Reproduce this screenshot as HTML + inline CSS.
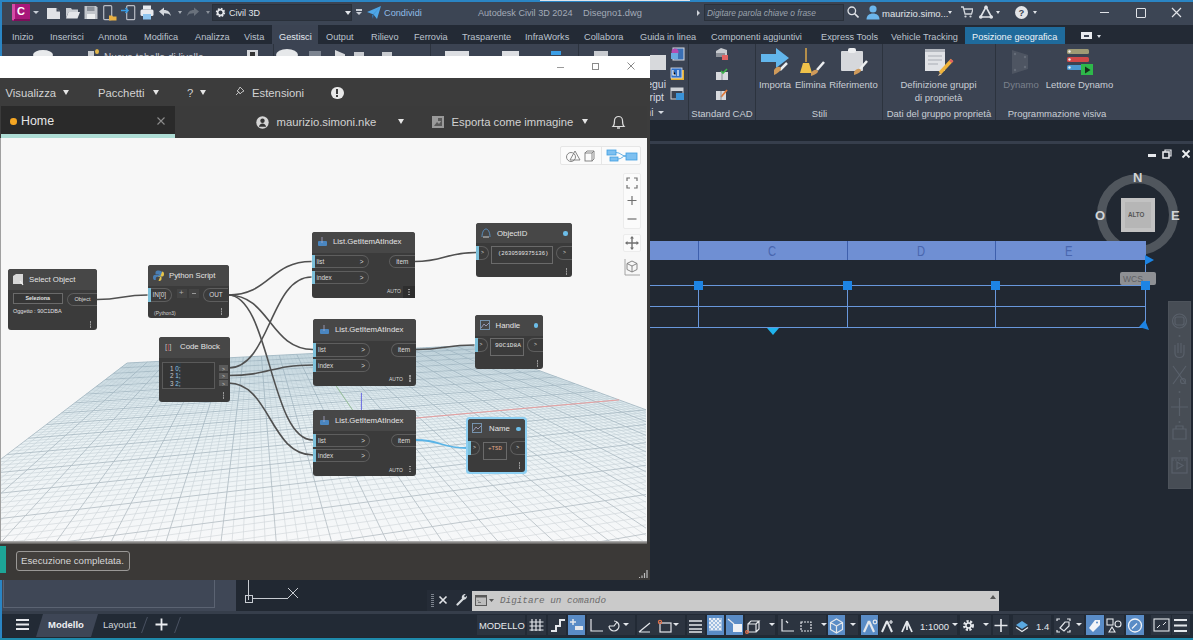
<!DOCTYPE html>
<html><head><meta charset="utf-8">
<style>
*{box-sizing:border-box}
html,body{margin:0;padding:0}
body{width:1193px;height:640px;overflow:hidden;position:relative;background:#212832;font-family:"Liberation Sans",sans-serif;color:#d8dde4}
.a{position:absolute}
.t{position:absolute;white-space:nowrap;line-height:1}
.tab{position:absolute;top:32px;font-size:9.2px;color:#bcc3cd;white-space:nowrap;line-height:11px}
.rl{position:absolute;font-size:9.5px;color:#c9ced5;white-space:nowrap;line-height:11px;text-align:center}
.sep{position:absolute;top:44px;width:1px;height:76px;background:#2c333e}
.sb{position:absolute;top:615px;height:20px;background:#2c3440}
.hl{background:#5a8cc6}
.dm{position:absolute;font-size:11.3px;color:#d2d2d2;white-space:nowrap;line-height:14px}
.tri{position:absolute;width:0;height:0;border-left:3.5px solid transparent;border-right:3.5px solid transparent;border-top:5px solid #e6e6e6}
.node{position:absolute;background:#3b3b3b;border-radius:3px;overflow:hidden}
.nh{position:absolute;left:0;top:0;right:0;background:#474747}
.nt{position:absolute;font-size:7.8px;color:#e4e4e4;white-space:nowrap;line-height:10px}
.pin{position:absolute;border:1px solid #5e5e5e;border-left:none;border-radius:0 7px 7px 0;font-size:6.4px;color:#dcdcdc;line-height:11px;padding-left:5px}
.pin:before{content:"";position:absolute;left:0;top:-1px;bottom:-1px;width:3px;background:#7cc0da}
.pout{position:absolute;border:1px solid #5e5e5e;border-right:none;border-radius:7px 0 0 7px;font-size:6.4px;color:#dcdcdc;line-height:11px;text-align:center}
.kb{position:absolute;width:1.5px;height:1.5px;background:#9a9a9a;box-shadow:0 2.5px 0 #9a9a9a,0 5px 0 #9a9a9a}
</style></head><body>

<!-- ===== AutoCAD frame ===== -->
<div class="a" style="left:0;top:0;width:1193px;height:2px;background:#2a85c4"></div>
<div class="a" style="left:0;top:0;width:2px;height:640px;background:#2a85c4"></div>
<div class="a" style="left:540px;top:0;width:150px;height:1px;background:#dfe6ee"></div>
<div class="a" style="left:2px;top:2px;width:1191px;height:23px;background:#3c4554"></div>
<div class="a" style="left:2px;top:25px;width:1191px;height:19px;background:#232a35"></div>
<div class="a" style="left:2px;top:44px;width:1191px;height:76px;background:#3b4352"></div>
<div class="a" style="left:2px;top:120px;width:1191px;height:21px;background:#1f2630"></div>
<div class="a" style="left:2px;top:141px;width:1191px;height:3px;background:#363e4c"></div>

<!-- title bar -->
<div id="titlebar">
<div class="a" style="left:12px;top:4px;width:18px;height:17px;background:#a8177a;border-radius:1px"></div>
<div class="a" style="left:12px;top:4px;width:3px;height:16px;background:#d54ba6"></div>
<div class="a" style="left:14px;top:19px;width:16px;height:2px;background:#7d0f5a"></div>
<div class="t" style="left:17px;top:6px;font-size:11px;font-weight:bold;color:#fff">C</div>
<div class="tri" style="left:33px;top:11px;border-top-color:#c8ced6;border-width:3px 3px 0 3px"></div>
<!-- new -->
<svg class="a" style="left:46px;top:5px" width="15" height="15" viewBox="0 0 15 15"><path d="M1 3h9.5l3.5 3.5V14H1z" fill="#e0e2e6"/><path d="M10.5 3v3.5H14z" fill="#3c4554"/></svg>
<!-- open -->
<svg class="a" style="left:65px;top:5px" width="15" height="15" viewBox="0 0 15 15"><path d="M1 3h5l1 1.5h6V7H3.5L1 13z" fill="#c9cdd3"/><path d="M3.5 7H15l-2.5 6.5H1z" fill="#e4e6ea"/></svg>
<!-- save -->
<svg class="a" style="left:84px;top:5px" width="14" height="15" viewBox="0 0 14 15"><path d="M0.5 1h11.5l1.5 1.5V14H0.5z" fill="#c2c6cc"/><rect x="3" y="1.5" width="7.5" height="4.5" fill="#8a9099"/><rect x="3" y="9" width="8" height="5" fill="#eceef0"/></svg>
<!-- saveas/phone -->
<svg class="a" style="left:103px;top:5px" width="14" height="16" viewBox="0 0 14 16"><rect x="0.7" y="0.7" width="8" height="14" rx="1" fill="#3c4554" stroke="#b8bcc4" stroke-width="1.2"/><path d="M6 10.5h3l1 1h3.5v4H6z" fill="#e8b042"/></svg>
<!-- import -->
<svg class="a" style="left:121px;top:5px" width="15" height="16" viewBox="0 0 15 16"><rect x="5.7" y="0.7" width="8" height="14" rx="1" fill="none" stroke="#b8bcc4" stroke-width="1.2"/><path d="M0 5.5h6.5M4.5 3L7 5.5 4.5 8" stroke="#3a9ee6" stroke-width="1.5" fill="none"/></svg>
<!-- print -->
<svg class="a" style="left:140px;top:5px" width="14" height="15" viewBox="0 0 14 15"><rect x="3" y="0.5" width="8" height="4" fill="#e8eaee"/><rect x="0.5" y="4.5" width="13" height="6.5" rx="1.5" fill="#e8eaee"/><rect x="3" y="9" width="8" height="5.5" fill="#8ec4ee"/></svg>
<!-- undo -->
<svg class="a" style="left:159px;top:7px" width="12" height="10" viewBox="0 0 12 10"><path d="M0 4.5L5 0.5V3c4 0 6 2 7 6-1.5-2-3.5-2.7-7-2.7V9z" fill="#d4d8de"/></svg>
<div class="tri" style="left:178px;top:11px;border-top-color:#aab0b8;border-width:3px 2px 0 2px"></div>
<svg class="a" style="left:187px;top:7px" width="12" height="10" viewBox="0 0 12 10"><path d="M12 4.5L7 0.5V3c-4 0-6 2-7 6 1.5-2 3.5-2.7 7-2.7V9z" fill="#69717c"/></svg>
<div class="tri" style="left:206px;top:11px;border-top-color:#8a9099;border-width:3px 2px 0 2px"></div>
<!-- combo -->
<div class="a" style="left:212px;top:4px;width:140px;height:17px;background:#2f3642;border:1px solid #29303a"></div>
<svg class="a" style="left:215px;top:7px" width="11" height="11" viewBox="0 0 11 11"><circle cx="5.5" cy="5.5" r="3.6" fill="none" stroke="#e6e8ec" stroke-width="2.2" stroke-dasharray="1.6 1.2"/><circle cx="5.5" cy="5.5" r="2.8" fill="none" stroke="#e6e8ec" stroke-width="1.5"/></svg>
<div class="t" style="left:229px;top:9px;font-size:9px;color:#e2e5ea">Civil 3D</div>
<div class="tri" style="left:345px;top:11px;border-top-color:#e2e5ea;border-width:4px 3px 0 3px"></div>
<div class="a" style="left:356px;top:9px;width:6px;height:1.5px;background:#c9ced6"></div>
<div class="tri" style="left:356px;top:12px;border-top-color:#c9ced6;border-width:3px 3px 0 3px"></div>
<svg class="a" style="left:367px;top:6px" width="14" height="13" viewBox="0 0 14 13"><path d="M0 6L14 0 10 13 6.5 8.5z" fill="#4ea6e6"/><path d="M6.5 8.5L14 0 5 9.5 6 13z" fill="#2f7fc0"/></svg>
<div class="t" style="left:384px;top:9px;font-size:9.2px;color:#8fbce6">Condividi</div>
<div class="t" style="left:478px;top:9px;font-size:9.1px;color:#a3abb7">Autodesk Civil 3D 2024</div>
<div class="t" style="left:583px;top:9px;font-size:9.3px;color:#a3abb7">Disegno1.dwg</div>
<div class="a" style="left:697px;top:9.5px;width:0;height:0;border-top:3px solid transparent;border-bottom:3px solid transparent;border-left:3.5px solid #d0d4da"></div>
<div class="a" style="left:704px;top:4px;width:140px;height:17px;background:#343c49;border:1px solid #2a313b"></div>
<div class="t" style="left:707px;top:9px;font-size:8.4px;font-style:italic;color:#9ba3ae">Digitare parola chiave o frase</div>
<svg class="a" style="left:847px;top:6px" width="12" height="12" viewBox="0 0 12 12"><circle cx="4.8" cy="4.8" r="3.8" fill="none" stroke="#dfe2e7" stroke-width="1.3"/><path d="M7.5 7.5L11.5 11.5" stroke="#dfe2e7" stroke-width="1.6"/></svg>
<svg class="a" style="left:866px;top:5px" width="14" height="15" viewBox="0 0 14 15"><circle cx="7" cy="4" r="3.6" fill="#6cb6ec"/><path d="M0.5 14.5c0-4 2.8-6 6.5-6s6.5 2 6.5 6z" fill="#6cb6ec"/></svg>
<div class="t" style="left:882px;top:9px;font-size:9.5px;color:#e2e5ea">maurizio.simo...</div>
<div class="tri" style="left:948px;top:11px;border-top-color:#dfe2e7;border-width:3px 2px 0 2px"></div>
<svg class="a" style="left:961px;top:6px" width="12" height="12" viewBox="0 0 12 12"><path d="M0 1h2.2l1.8 7h6.5L12 3H3.2" fill="none" stroke="#cfd3d9" stroke-width="1.3"/><circle cx="4.5" cy="10.5" r="1.1" fill="#cfd3d9"/><circle cx="9.5" cy="10.5" r="1.1" fill="#cfd3d9"/></svg>
<svg class="a" style="left:979px;top:5px" width="14" height="14" viewBox="0 0 14 14"><path d="M7 2L1.5 12h11z" fill="none" stroke="#dfe2e7" stroke-width="1.6"/><circle cx="7" cy="2.3" r="1.8" fill="#dfe2e7"/><circle cx="1.8" cy="12" r="1.8" fill="#dfe2e7"/><circle cx="12.2" cy="12" r="1.8" fill="#dfe2e7"/></svg>
<div class="tri" style="left:996px;top:11px;border-top-color:#dfe2e7;border-width:3px 2px 0 2px"></div>
<div class="a" style="left:1015px;top:6px;width:13px;height:13px;border-radius:50%;background:#e3e5e8"></div>
<div class="t" style="left:1018.5px;top:8px;font-size:9.5px;font-weight:bold;color:#3c4554">?</div>
<div class="tri" style="left:1033px;top:11px;border-top-color:#dfe2e7;border-width:3px 2px 0 2px"></div>
<div class="a" style="left:1100px;top:12px;width:9px;height:1.2px;background:#e0e3e8"></div>
<div class="a" style="left:1136px;top:8px;width:10px;height:10px;border:1.2px solid #e0e3e8;border-radius:1px"></div>
<svg class="a" style="left:1171px;top:7px" width="11" height="11" viewBox="0 0 11 11"><path d="M1 1l9 9M10 1l-9 9" stroke="#e0e3e8" stroke-width="1.2"/></svg>
</div>

<!-- tabs -->
<div class="a" style="left:272px;top:25px;width:46px;height:19px;background:#3b4352"></div>
<div class="a" style="left:965px;top:27px;width:100px;height:17px;background:#1f6b9c"></div>
<div class="tab" style="left:12px">Inizio</div>
<div class="tab" style="left:50px">Inserisci</div>
<div class="tab" style="left:98px">Annota</div>
<div class="tab" style="left:144px">Modifica</div>
<div class="tab" style="left:195px">Analizza</div>
<div class="tab" style="left:244px">Vista</div>
<div class="tab" style="left:279px;color:#e4e8ee">Gestisci</div>
<div class="tab" style="left:326px">Output</div>
<div class="tab" style="left:371px">Rilievo</div>
<div class="tab" style="left:414px">Ferrovia</div>
<div class="tab" style="left:462px">Trasparente</div>
<div class="tab" style="left:525px">InfraWorks</div>
<div class="tab" style="left:584px">Collabora</div>
<div class="tab" style="left:640px">Guida in linea</div>
<div class="tab" style="left:711px">Componenti aggiuntivi</div>
<div class="tab" style="left:821px">Express Tools</div>
<div class="tab" style="left:891px">Vehicle Tracking</div>
<div class="tab" style="left:972px;color:#eef3f8">Posizione geografica</div>
<div class="a" style="left:1081px;top:32px;width:11px;height:7px;background:#e8eaee"></div>
<div class="a" style="left:1084px;top:35px;width:5px;height:1.5px;background:#3a4252"></div>
<div class="tri" style="left:1097px;top:34.5px;border-top-color:#d8dce2;border-width:3px 2.5px 0 2.5px"></div>

<!-- ribbon -->
<div id="ribbon">
<div class="sep" style="left:273px"></div>
<div class="sep" style="left:430px"></div>
<div class="sep" style="left:578px"></div>
<div class="sep" style="left:688px"></div>
<div class="sep" style="left:755px"></div>
<div class="sep" style="left:882px"></div>
<div class="sep" style="left:995px"></div>
<!-- peeking icons top -->
<div class="a" style="left:33px;top:50px;width:20px;height:10px;border-radius:50%;background:#e8eaec"></div>
<div class="a" style="left:88px;top:51px;width:6px;height:5px;background:#c9ccd0"></div>
<div class="a" style="left:95px;top:49px;width:4px;height:5px;border-radius:50%;background:#e2b64a"></div>
<div class="t" style="left:104px;top:52.5px;font-size:10px;color:#c4c8ce">Nuova tabella di livello...</div>
<div class="a" style="left:247px;top:50px;width:11px;height:7px;background:#d6d8dc"></div>
<div class="a" style="left:250px;top:52px;width:5px;height:5px;background:#333"></div>
<div class="a" style="left:276px;top:49px;width:22px;height:12px;border-radius:50%;background:#e6e8ea"></div>
<div class="a" style="left:309px;top:51px;width:12px;height:6px;background:#7c8490"></div>
<div class="a" style="left:335px;top:50px;width:10px;height:7px;background:#d8dadd;clip-path:polygon(0 0,100% 60%,100% 100%,0 100%)"></div>
<div class="a" style="left:354px;top:52px;width:10px;height:5px;background:#c8cbd0"></div>
<div class="a" style="left:382px;top:52px;width:10px;height:5px;background:#c8cbd0"></div>
<div class="a" style="left:445px;top:51px;width:24px;height:6px;background:#dcdee2"></div>
<div class="a" style="left:502px;top:51px;width:17px;height:6px;background:#dcdee2"></div>
<div class="a" style="left:551px;top:51px;width:10px;height:4px;background:#3a9ee6"></div>
<div class="a" style="left:594px;top:51px;width:14px;height:6px;background:#c8cbd0"></div>
<!-- right of dynamo -->
<div class="a" style="left:650px;top:55px;width:16px;height:15px;background:#d7d9dc"></div>
<div class="t" style="left:565px;top:79px;width:101px;text-align:right;font-size:10.5px;color:#d4d9e0">Esegui</div>
<div class="t" style="left:565px;top:92px;width:99px;text-align:right;font-size:10.5px;color:#d4d9e0">script</div>
<div class="t" style="left:600px;top:108px;width:52px;text-align:right;font-size:10px;color:#d4d9e0">Applicazioni</div>
<div class="tri" style="left:658px;top:111px;border-top-color:#d4d9e0;border-width:3.5px 3px 0 3px"></div>
<svg class="a" style="left:670px;top:47px" width="15" height="14" viewBox="0 0 15 14"><rect x="3" y="1" width="11" height="12" fill="#3a6fb4" stroke="#d9dbe0" stroke-width="1"/><circle cx="5" cy="5" r="3.5" fill="#b54bb0"/><rect x="1" y="6" width="7" height="6" fill="#6aa8e0"/></svg>
<svg class="a" style="left:670px;top:67px" width="15" height="14" viewBox="0 0 15 14"><rect x="1" y="3" width="13" height="10" fill="#e4b030"/><rect x="1" y="1" width="11" height="10" fill="#2f6fc6" stroke="#e0e4ea" stroke-width="0.8"/><path d="M3 3v5h3M8 3v6" stroke="#fff" stroke-width="1.2"/></svg>
<svg class="a" style="left:670px;top:87px" width="15" height="14" viewBox="0 0 15 14"><rect x="1" y="1" width="12" height="11" fill="none" stroke="#d0d3d8" stroke-width="1"/><rect x="1" y="1" width="12" height="3" fill="#d0d3d8"/><rect x="6" y="6" width="8" height="7" fill="#3b93d8"/></svg>
<!-- standard cad -->
<svg class="a" style="left:715px;top:47px" width="14" height="14" viewBox="0 0 14 14"><path d="M1 4l5-3 6 2v6H1z" fill="#c8cbd0"/><rect x="1" y="6" width="9" height="4" fill="#8c9098"/><rect x="7" y="8" width="6" height="5" fill="#e26464"/></svg>
<svg class="a" style="left:715px;top:67px" width="14" height="14" viewBox="0 0 14 14"><rect x="1" y="5" width="12" height="8" fill="#d8dade"/><path d="M7 5v8" stroke="#8c9098"/><path d="M6 4l2 2 4-4" stroke="#3db44a" stroke-width="1.6" fill="none"/></svg>
<svg class="a" style="left:715px;top:87px" width="14" height="14" viewBox="0 0 14 14"><rect x="1" y="4" width="10" height="9" fill="#d8dade"/><path d="M6 10l6-7" stroke="#e07a3a" stroke-width="1.8"/><path d="M6 4v9" stroke="#8c9098"/></svg>
<div class="rl" style="left:689px;top:108px;width:66px">Standard CAD</div>
<!-- stili -->
<svg class="a" style="left:760px;top:48px" width="30" height="28" viewBox="0 0 30 28"><path d="M1 6h15V0l13 10-13 10v-6H1z" fill="#62b6ec"/><path d="M27 15l-7 7" stroke="#eceef0" stroke-width="2.5"/><path d="M14 22c2-3 5-4 6.5-2.5S20 24 14 27z" fill="#cf9a5a"/></svg>
<div class="rl" style="left:756px;top:79px;width:38px">Importa</div>
<svg class="a" style="left:796px;top:48px" width="30" height="28" viewBox="0 0 30 28"><path d="M10 0v14" stroke="#d4a24a" stroke-width="1.6"/><path d="M4 25l3-10h6l3 10z" fill="#f0c24a"/><path d="M28 14l-7 8" stroke="#eceef0" stroke-width="2.5"/><path d="M15 25c2-3 5-4 6.5-2.5S21 26 15 28z" fill="#cf9a5a"/></svg>
<div class="rl" style="left:794px;top:79px;width:33px">Elimina</div>
<svg class="a" style="left:839px;top:47px" width="30" height="30" viewBox="0 0 30 30"><rect x="2" y="4" width="22" height="20" rx="1" fill="#d6d8dc"/><rect x="9" y="1" width="8" height="5" rx="2" fill="#eceef0"/><path d="M28 14l-7 8" stroke="#eceef0" stroke-width="2.5"/><path d="M15 25c2-3 5-4 6.5-2.5S21 26 15 28z" fill="#cf9a5a"/></svg>
<div class="rl" style="left:827px;top:79px;width:53px">Riferimento</div>
<div class="rl" style="left:757px;top:108px;width:125px">Stili</div>
<!-- dati -->
<svg class="a" style="left:923px;top:47px" width="32" height="30" viewBox="0 0 32 30"><rect x="2" y="2" width="20" height="22" fill="#e0e2e6"/><rect x="2" y="2" width="20" height="3" fill="#b5b9c0"/><path d="M5 9h14M5 13h14M5 17h10" stroke="#a8acb4" stroke-width="1"/><path d="M29 13L17 26" stroke="#f0b43c" stroke-width="3.5"/><path d="M17 26l-2 3 3.5-1.5z" fill="#e8c9a0"/><path d="M29 13l-1.5 2" stroke="#e06060" stroke-width="3.5"/></svg>
<div class="rl" style="left:890px;top:79px;width:97px">Definizione gruppi</div>
<div class="rl" style="left:890px;top:92px;width:97px">di proprietà</div>
<div class="rl" style="left:883px;top:108px;width:112px">Dati del gruppo proprietà</div>
<!-- programmazione -->
<svg class="a" style="left:1010px;top:48px" width="22" height="28" viewBox="0 0 22 28"><path d="M2 2l16 5v14L2 26z" fill="#4e5562"/><circle cx="5" cy="6" r="1.2" fill="#656c78"/><circle cx="5" cy="22" r="1.2" fill="#656c78"/><circle cx="15" cy="9" r="1.2" fill="#656c78"/><circle cx="15" cy="19" r="1.2" fill="#656c78"/></svg>
<div class="rl" style="left:999px;top:79px;width:44px;color:#7a818c">Dynamo</div>
<svg class="a" style="left:1066px;top:48px" width="28" height="28" viewBox="0 0 28 28"><rect x="1" y="1" width="22" height="5" rx="1.5" fill="#9e9a74"/><circle cx="3.5" cy="3.5" r="1.2" fill="#eee"/><rect x="1" y="9" width="22" height="5" rx="1.5" fill="#d04848"/><circle cx="3.5" cy="11.5" r="1.2" fill="#eee"/><rect x="1" y="17" width="16" height="5" rx="1.5" fill="#4a98d0"/><circle cx="3.5" cy="19.5" r="1.2" fill="#eee"/><rect x="15" y="16" width="12" height="11" fill="#2eb84a"/><path d="M19 18.5v7l5.5-3.5z" fill="#16301c"/></svg>
<div class="rl" style="left:1043px;top:79px;width:73px">Lettore Dynamo</div>
<div class="rl" style="left:996px;top:108px;width:122px">Programmazione visiva</div>
</div>

<!-- drawing area -->
<div id="drawing">
<div class="a" style="left:1148px;top:154px;width:8px;height:3px;background:#e6e8ec"></div>
<svg class="a" style="left:1162px;top:149px" width="10" height="10" viewBox="0 0 10 10"><rect x="1" y="3" width="6" height="6" fill="none" stroke="#e6e8ec" stroke-width="1.6"/><path d="M3 3V1h6v6H7" fill="none" stroke="#e6e8ec" stroke-width="1.2"/></svg>
<svg class="a" style="left:1181px;top:149px" width="10" height="10" viewBox="0 0 10 10"><path d="M1.5 1.5l7 7M8.5 1.5l-7 7" stroke="#eef0f2" stroke-width="1.8"/></svg>
<!-- viewcube -->
<svg class="a" style="left:1090px;top:168px" width="95" height="95" viewBox="0 0 95 95"><circle cx="47.5" cy="46.7" r="36" fill="none" stroke="#50565d" stroke-width="9"/></svg>
<div class="a" style="left:1121px;top:198px;width:34px;height:34px;background:#b6b6b6;box-shadow:inset 0 0 0 4px #c2c2c2"></div>
<div class="t" style="left:1128px;top:211px;font-size:8px;font-weight:bold;color:#555;transform:scaleX(0.78);transform-origin:left">ALTO</div>
<div class="t" style="left:1133px;top:171px;font-size:13px;font-weight:bold;color:#d2d4d6">N</div>
<div class="t" style="left:1095px;top:209px;font-size:13px;font-weight:bold;color:#d2d4d6">O</div>
<div class="t" style="left:1171px;top:209px;font-size:13px;font-weight:bold;color:#d2d4d6">E</div>
<!-- blue bar -->
<div class="a" style="left:650px;top:241px;width:496px;height:19px;background:#6f8fd3"></div>
<div class="a" style="left:698px;top:241px;width:1px;height:19px;background:#3e5fac"></div>
<div class="a" style="left:847px;top:241px;width:1px;height:19px;background:#3e5fac"></div>
<div class="a" style="left:995px;top:241px;width:1px;height:19px;background:#3e5fac"></div>
<div class="t" style="left:767px;top:244px;font-size:14px;color:#4966ae;transform:scaleX(0.8)">C</div>
<div class="t" style="left:916px;top:244px;font-size:14px;color:#4966ae;transform:scaleX(0.8)">D</div>
<div class="t" style="left:1064px;top:244px;font-size:14px;color:#4966ae;transform:scaleX(0.8)">E</div>
<div class="a" style="left:650px;top:285px;width:496px;height:1px;background:#6897dc"></div>
<div class="a" style="left:650px;top:306px;width:496px;height:1px;background:#6897dc"></div>
<div class="a" style="left:650px;top:327px;width:496px;height:1px;background:#6897dc"></div>
<div class="a" style="left:698px;top:285px;width:1px;height:43px;background:#6897dc"></div>
<div class="a" style="left:847px;top:285px;width:1px;height:43px;background:#6897dc"></div>
<div class="a" style="left:995px;top:285px;width:1px;height:43px;background:#6897dc"></div>
<div class="a" style="left:1144.5px;top:260px;width:1px;height:68px;background:#6897dc"></div>
<div class="a" style="left:694px;top:281px;width:9px;height:9px;background:#1d84e4"></div>
<div class="a" style="left:843px;top:281px;width:9px;height:9px;background:#1d84e4"></div>
<div class="a" style="left:991px;top:281px;width:9px;height:9px;background:#1d84e4"></div>
<div class="a" style="left:1120px;top:272px;width:36px;height:13px;background:#8e9094;border-radius:2px"></div>
<div class="t" style="left:1123px;top:275px;font-size:8.5px;color:#5e6064">WCS</div>
<div class="a" style="left:1141px;top:281px;width:9px;height:9px;background:#1d84e4"></div>
<div class="a" style="left:767px;top:328px;width:0;height:0;border-left:6px solid transparent;border-right:6px solid transparent;border-top:7px solid #1fb4ee"></div>
<div class="a" style="left:1145px;top:255px;width:0;height:0;border-top:5px solid transparent;border-bottom:5px solid transparent;border-left:9px solid #1d84e4"></div>
<div class="a" style="left:1139px;top:320px;width:10px;height:10px;background:#1d84e4;clip-path:polygon(60% 0,100% 100%,0 70%)"></div>

<!-- navbar -->
<div class="a" style="left:1168px;top:301px;width:23px;height:188px;background:#474d55;border:1px solid #4d535b"></div>
<svg class="a" style="left:1168px;top:301px" width="23" height="188" viewBox="0 0 23 188"><g fill="none" stroke="#59606a" stroke-width="1.2"><circle cx="11.5" cy="20" r="7"/><rect x="7" y="16" width="9" height="8" rx="2"/><path d="M7 52v-8M10 52v-10M13 52v-10M16 52v-8M7 52c0 6 9 6 9 0"/><path d="M5 65l13 18M18 65L5 83"/><circle cx="15" cy="80" r="2.5"/><path d="M11.5 97v18M3 106h17"/><path d="M5 128h13v10H5zM8 128v-3h7v3"/><rect x="4" y="157" width="15" height="15"/><path d="M9 161v7l6-3.5z"/><path d="M4 159h15" stroke-dasharray="2 1"/></g><g fill="#59606a"><circle cx="11.5" cy="35" r="1"/><circle cx="11.5" cy="91" r="1"/><circle cx="11.5" cy="121" r="1"/><circle cx="11.5" cy="150" r="1"/></g></svg>
<!-- UCS -->
<div class="a" style="left:248px;top:580px;width:1px;height:20px;background:#c8ccd2"></div>
<div class="a" style="left:244.5px;top:594.5px;width:8px;height:8px;border:1px solid #c8ccd2"></div>
<div class="a" style="left:252px;top:598px;width:36px;height:1px;background:#c8ccd2"></div>
<svg class="a" style="left:287px;top:587px" width="12" height="12" viewBox="0 0 12 12"><path d="M1 1l10 10M11 1L1 11" stroke="#c8ccd2" stroke-width="1"/></svg>
<!-- command line -->
<div class="a" style="left:427px;top:590px;width:572px;height:21px;background:#252c37"></div>
<div class="a" style="left:431px;top:594px;width:3px;height:13px;background:repeating-linear-gradient(#7c838d 0 1px,transparent 1px 2px)"></div>
<svg class="a" style="left:438px;top:595px" width="10" height="10" viewBox="0 0 10 10"><path d="M1.5 1.5l7 7M8.5 1.5l-7 7" stroke="#e2e4e8" stroke-width="1.6"/></svg>
<svg class="a" style="left:456px;top:593px" width="12" height="13" viewBox="0 0 12 13"><path d="M1.5 11.5L7 6" stroke="#d8dce0" stroke-width="2.2" stroke-linecap="round"/><path d="M6 5.5c-.8-2.5 1-4.8 3.8-4.5L8 3l1 1.5 2-1.7c.4 2.7-2 4.5-4.5 3.8z" fill="#d8dce0"/></svg>
<div class="a" style="left:471.5px;top:590.5px;width:527px;height:20px;background:#cacaca"></div>
<svg class="a" style="left:475px;top:595px" width="20" height="11" viewBox="0 0 20 11"><rect x="0.5" y="0.5" width="11" height="10" fill="#bdbdbd" stroke="#5a5a5a" stroke-width="1"/><rect x="0.5" y="0.5" width="11" height="2" fill="#5a5a5a"/><path d="M2.5 5l1.5 1.5M3 7.5h3" stroke="#777"/><path d="M14 4h5l-2.5 3z" fill="#555"/></svg>
<div class="t" style="left:500px;top:596px;font-size:9.3px;font-family:'Liberation Mono',monospace;font-style:italic;color:#6a6a6a">Digitare un comando</div>
<div class="a" style="left:990px;top:595px;width:0;height:0;border-left:3px solid transparent;border-right:3px solid transparent;border-bottom:4px solid #555"></div>
</div>

<!-- bottom -->
<div id="bottom">
<div class="a" style="left:2px;top:575px;width:234px;height:36px;background:#3f4756"></div>
<div class="a" style="left:3px;top:560px;width:212px;height:48px;border:1px solid #5b6372"></div>
<div class="a" style="left:2px;top:611px;width:1191px;height:3px;background:#363e4b"></div>
<div class="a" style="left:2px;top:614px;width:1191px;height:23px;background:#222a35"></div>
<div class="a" style="left:0;top:638.2px;width:1193px;height:1.8px;background:#1e8aac"></div>
<!-- layout tabs -->
<div class="a" style="left:16px;top:619px;width:13px;height:2px;background:#e8eaee;box-shadow:0 4.5px 0 #e8eaee,0 9px 0 #e8eaee"></div>
<div class="a" style="left:36px;top:614px;width:62px;height:23px;background:#3e4656;clip-path:polygon(7px 0,100% 0,calc(100% - 7px) 100%,0 100%)"></div>
<div class="t" style="left:48px;top:620px;font-size:9.5px;font-weight:bold;color:#eef0f3">Modello</div>
<div class="t" style="left:103px;top:620px;font-size:9.5px;color:#d0d4da">Layout1</div>
<div class="a" style="left:144px;top:617px;width:1px;height:16px;background:#4a5262;transform:skewX(-20deg)"></div>
<svg class="a" style="left:155px;top:618px" width="13" height="13" viewBox="0 0 13 13"><path d="M6.5 0.5v12M0.5 6.5h12" stroke="#eceef2" stroke-width="1.8"/></svg>
<div class="a" style="left:177px;top:617px;width:1px;height:16px;background:#4a5262;transform:skewX(-20deg)"></div>
<!-- status buttons -->
<div class="sb" style="left:477px;width:48px"></div>
<div class="t" style="left:479px;top:621px;font-size:9.4px;color:#e8eaee">MODELLO</div>
<div class="sb" style="left:527px;width:19px"></div>
<div class="sb" style="left:548px;width:18px"></div>
<div class="sb hl" style="left:568px;width:17px"></div>
<div class="sb" style="left:587px;width:48px"></div>
<div class="sb" style="left:637px;width:48px"></div>
<div class="sb" style="left:687px;width:18px"></div>
<div class="sb hl" style="left:707px;width:17px"></div>
<div class="sb hl" style="left:726px;width:17px"></div>
<div class="sb" style="left:745px;width:30px"></div>
<div class="sb" style="left:778px;width:48px"></div>
<div class="sb hl" style="left:828px;width:17px"></div>
<div class="sb" style="left:845px;width:13px"></div>
<div class="sb hl" style="left:861px;width:17px"></div>
<div class="sb" style="left:879px;width:78px"></div>
<div class="sb" style="left:960px;width:31px"></div>
<div class="sb" style="left:993px;width:16px"></div>
<div class="sb" style="left:1013px;width:38px"></div>
<div class="sb" style="left:1054px;width:30px"></div>
<div class="sb hl" style="left:1086px;width:18px"></div>
<div class="sb" style="left:1105px;width:19px"></div>
<div class="sb hl" style="left:1126px;width:18px"></div>
<div class="sb" style="left:1151px;width:20px"></div>
<div class="sb" style="left:1172px;width:18px"></div>
<svg class="a" style="left:527px;top:615px" width="666" height="20" viewBox="527 615 666 20"><g fill="none" stroke="#e4e7eb" stroke-width="1.2">
<path d="M532 619v12M536 619v12M540 619v12M529.5 622h14M529.5 626h14M529.5 630h14"/>
<path d="M551 631h5v-5h4v-6h5" stroke-width="2"/>
<path d="M573 619v6M570 622h6" stroke-width="1.5"/><rect x="575" y="626" width="8" height="4" fill="#e4e7eb" stroke="none"/>
<path d="M591 619v12h12"/><path d="M609 626a5 5 0 1 0 5-5M609 626h5l3-4" />
<path d="M623 623h6l-3 3z" fill="#e4e7eb" stroke="none"/>
<path d="M639 632l11-9M639 632h11"/>
<rect x="660" y="623" width="11" height="9"/><circle cx="660" cy="622" r="1.6" stroke="#e0704a"/>
<path d="M673 623h6l-3 3z" fill="#e4e7eb" stroke="none"/>
<path d="M689 621h13M689 625h13M689 629h13M689 632h13" stroke-width="1.5"/>
</g><g fill="#e8eef6"><rect x="709" y="618" width="13" height="13" fill="#9fbde0"/><path d="M709 618h2v2h-2zM713 618h2v2h-2zM717 618h2v2h-2zM711 620h2v2h-2zM715 620h2v2h-2zM719 620h2v2h-2zM709 622h2v2h-2zM713 622h2v2h-2zM717 622h2v2h-2zM711 624h2v2h-2zM715 624h2v2h-2zM719 624h2v2h-2zM709 626h2v2h-2zM713 626h2v2h-2zM717 626h2v2h-2zM711 628h2v2h-2zM715 628h2v2h-2zM719 628h2v2h-2z"/></g><g fill="none" stroke="#e4e7eb" stroke-width="1.2">
<rect x="733" y="624" width="9" height="8" fill="#eef1f5" stroke="none"/><path d="M728 619l6 5"/>
<path d="M748 624h8v8h-8zM748 624l3-3h8l-3 3M759 621v8l-3 3"/><circle cx="747" cy="632" r="1.4" stroke="#e0704a"/>
<path d="M769 623h6l-3 3z" fill="#e4e7eb" stroke="none"/>
<path d="M782 619v12h12M786 621l2 2"/>
<rect x="801" y="622" width="10" height="9" stroke-dasharray="2 1"/>
<path d="M821 623h6l-3 3z" fill="#e4e7eb" stroke="none"/>
<path d="M836.5 619l6 3.5v7l-6 3.5-6-3.5v-7zM836.5 626v7M836.5 626l6-3.5M836.5 626l-6-3.5"/>
<path d="M850 623h6l-3 3z" fill="#e4e7eb" stroke="none"/>
<path d="M869 621l-5 11M869 621l5 11" stroke-width="2.2"/><circle cx="875" cy="622" r="1.8"/>
<path d="M887 621l-5 11M887 621l5 11" stroke-width="2"/><path d="M891 620v4M889 622h4"/>
<path d="M907 621l-5 11M907 621l5 11M907 621v9" stroke-width="1.8"/>
</g>
<text x="920" y="629.5" font-family="Liberation Sans" font-size="9.5" fill="#e4e7eb">1:1000</text>
<path d="M952 623h6l-3 3z" fill="#e4e7eb"/>
<circle cx="968.5" cy="625.5" r="4" fill="none" stroke="#e4e7eb" stroke-width="3" stroke-dasharray="2 1.3"/><circle cx="968.5" cy="625.5" r="2.5" fill="none" stroke="#e4e7eb" stroke-width="1.5"/>
<path d="M983 623h6l-3 3z" fill="#e4e7eb"/>
<path d="M1001 619v13M994.5 625.5h13" stroke="#e4e7eb" stroke-width="1.6"/>
<path d="M1016 625l6-4 6 4-6 4z" fill="#5aa8e0"/><path d="M1016 627.5l6 4 6-4" fill="none" stroke="#e4e7eb" stroke-width="1.2"/>
<text x="1036" y="629.5" font-family="Liberation Sans" font-size="9.5" fill="#e4e7eb">1.4</text>
<path d="M1057 621v-2h3M1070 621v-2h-3M1057 630v2h3M1070 630v2h-3" fill="none" stroke="#e4e7eb" stroke-width="1.2"/><path d="M1060 628l5-6h4v4l-5 5z" fill="none" stroke="#e4e7eb" stroke-width="1.2"/>
<path d="M1076 623h6l-3 3z" fill="#e4e7eb"/>
<path d="M1089 628l6-8h5v5l-7 7z" fill="#f2f4f7"/><circle cx="1097" cy="622.5" r="1" fill="#5a8cc6"/>
<g fill="none" stroke="#e4e7eb" stroke-width="1.1"><rect x="1107" y="619" width="6" height="6"/><circle cx="1118" cy="624" r="3"/><path d="M1112 627l-3 5h6z"/></g>
<circle cx="1135" cy="625.5" r="6.5" fill="none" stroke="#f2f4f7" stroke-width="1.3"/><path d="M1132 628.5l5-5" stroke="#f2f4f7" stroke-width="1.3"/>
<rect x="1154" y="619" width="15" height="12" fill="none" stroke="#e4e7eb" stroke-width="1.1"/><path d="M1157 628l3-3M1166 622l-3 3" stroke="#e4e7eb" stroke-width="1"/>
<path d="M1174 620h13M1174 625.5h13M1174 631h13" stroke="#e4e7eb" stroke-width="2"/>
</svg>
</div>

<!-- ===== Dynamo window ===== -->
<div id="dynamo">
<div class="a" style="left:0;top:56px;width:650px;height:524px;background:#3c3c3c"></div>
<div class="a" style="left:0;top:56px;width:650px;height:22px;background:#ffffff"></div>
<div class="a" style="left:557px;top:66.5px;width:7px;height:1px;background:#9a9a9a"></div>
<div class="a" style="left:592px;top:63px;width:7px;height:7px;border:1px solid #8a8a8a"></div>
<svg class="a" style="left:627px;top:62px" width="8" height="8" viewBox="0 0 8 8"><path d="M0.5 0.5l7 7M7.5 0.5l-7 7" stroke="#8a8a8a" stroke-width="1"/></svg>
<!-- menu -->
<div class="dm" style="left:5.5px;top:86px">Visualizza</div>
<div class="tri" style="left:63px;top:90px"></div>
<div class="dm" style="left:98px;top:86px">Pacchetti</div>
<div class="tri" style="left:153px;top:90px"></div>
<div class="dm" style="left:187px;top:86px">?</div>
<div class="tri" style="left:200px;top:90px"></div>
<svg class="a" style="left:235px;top:86px" width="10" height="10" viewBox="0 0 10 10"><path d="M5 1l4 4-2 1-2 2-1-2-3 3 3-3-2-1 2-2z" fill="none" stroke="#bdbdbd" stroke-width="1"/></svg>
<div class="dm" style="left:252px;top:86px">Estensioni</div>
<div class="a" style="left:331px;top:86.5px;width:12.5px;height:12.5px;border-radius:50%;background:#e8e8e8"></div>
<div class="a" style="left:336.3px;top:89px;width:2px;height:5px;background:#3c3c3c"></div>
<div class="a" style="left:336.3px;top:95px;width:2px;height:2px;background:#3c3c3c"></div>
<!-- tab row -->
<div class="a" style="left:0;top:106px;width:647px;height:31.5px;background:#3b3b3b"></div>
<div class="a" style="left:1px;top:106px;width:174px;height:28px;background:#2a2a2a"></div>
<div class="a" style="left:1px;top:133.5px;width:174px;height:4px;background:#aeddd5"></div>
<div class="a" style="left:10px;top:118px;width:6.5px;height:6.5px;border-radius:50%;background:#f5a623"></div>
<div class="t" style="left:21px;top:114.5px;font-size:12.4px;color:#e6e6e6">Home</div>
<svg class="a" style="left:157px;top:117px" width="8" height="8" viewBox="0 0 8 8"><path d="M0.5 0.5l7 7M7.5 0.5l-7 7" stroke="#8c8c8c" stroke-width="1.1"/></svg>
<svg class="a" style="left:256px;top:115.5px" width="13" height="13" viewBox="0 0 13 13"><circle cx="6.5" cy="6.5" r="6.2" fill="#d6d6d6"/><circle cx="6.5" cy="4.8" r="2.2" fill="#353535"/><path d="M2.8 10.8c0.8-2.3 2.2-3.3 3.7-3.3s2.9 1 3.7 3.3z" fill="#353535"/></svg>
<div class="dm" style="left:276.5px;top:115px">maurizio.simoni.nke</div>
<div class="tri" style="left:398px;top:119px"></div>
<svg class="a" style="left:432px;top:116px" width="12" height="12" viewBox="0 0 12 12"><rect x="0" y="0" width="12" height="12" fill="#9a9a9a"/><path d="M2 10l3-4 2 2 3-4v6z" fill="#5a5a5a"/><rect x="6" y="2" width="4" height="3" fill="#5a5a5a"/></svg>
<div class="dm" style="left:451.5px;top:115px">Esporta come immagine</div>
<div class="tri" style="left:582px;top:119px"></div>
<svg class="a" style="left:611px;top:114px" width="15" height="16" viewBox="0 0 15 16"><path d="M2 12.5c1.5-1.5 1.5-3 1.5-6a4 4 0 0 1 8 0c0 3 0 4.5 1.5 6z" fill="none" stroke="#dcdcdc" stroke-width="1.2"/><path d="M6 14h3" stroke="#dcdcdc" stroke-width="1.4"/></svg>
<!-- canvas -->
<div class="a" style="left:0;top:137.5px;width:1.2px;height:404px;background:#a0a0a0"></div>
<div class="a" style="left:1.2px;top:137.5px;width:645.8px;height:404px;background:#f7f7f7;overflow:hidden">
<div class="a" style="left:-2px;top:0;width:647px;height:404px"><!--GRID--><svg width="647" height="404" style="position:absolute;left:0;top:0" viewBox="0 0 647 404"><defs><linearGradient id="gf" x1="0" y1="205" x2="0" y2="404" gradientUnits="userSpaceOnUse"><stop offset="0" stop-color="#d4e5ec"/><stop offset="0.4" stop-color="#e7f0f3"/><stop offset="1" stop-color="#f7f8f9"/></linearGradient><linearGradient id="gm" x1="0" y1="205" x2="0" y2="404" gradientUnits="userSpaceOnUse"><stop offset="0" stop-color="#b9cdd6"/><stop offset="1" stop-color="#d5d9dc"/></linearGradient><linearGradient id="gM" x1="0" y1="205" x2="0" y2="404" gradientUnits="userSpaceOnUse"><stop offset="0" stop-color="#9fb6c2"/><stop offset="1" stop-color="#bcc3c8"/></linearGradient></defs><polygon points="128.1,225.0 471.5,207.4 1421.0,555.7 -4300.2,3598.7" fill="url(#gf)"/><path d="M-3875.9 3373.0L132.2 224.8M-3123.6 2702.3L1371.9 537.7M-3503.2 3174.8L136.2 224.6M-2430.1 2173.9L1326.9 521.1M-3173.3 2999.3L140.3 224.4M-1972.8 1825.5L1285.3 505.9M-2879.2 2842.9L144.4 224.2M-1648.5 1578.5L1246.8 491.8M-2377.4 2576.0L152.4 223.7M-1219.4 1251.5L1177.9 466.5M-2161.7 2461.2L156.4 223.5M-1070.0 1137.7L1146.9 455.1M-1965.1 2356.7L160.4 223.3M-948.1 1044.9L1117.9 444.5M-1785.4 2261.1L164.3 223.1M-846.7 967.7L1090.8 434.6M-1468.3 2092.4L172.2 222.7M-687.8 846.6L1041.3 416.4M-1327.7 2017.6L176.2 222.5M-624.4 798.3L1018.7 408.1M-1197.4 1948.3L180.1 222.3M-569.0 756.1L997.4 400.3M-1076.3 1883.9L184.0 222.1M-520.2 718.9L977.2 392.9M-857.9 1767.7L191.7 221.7M-438.0 656.2L940.0 379.2M-759.1 1715.2L195.5 221.5M-403.1 629.7L922.7 372.9M-666.4 1665.9L199.4 221.3M-371.5 605.6L906.4 366.9M-579.3 1619.6L203.2 221.1M-342.9 583.8L890.8 361.2M-419.8 1534.7L210.8 220.8M-292.8 545.6L861.7 350.5M-346.6 1495.8L214.6 220.6M-270.7 528.8L848.2 345.6M-277.3 1458.9L218.3 220.4M-250.4 513.3L835.2 340.8M-211.6 1424.0L222.1 220.2M-231.6 499.0L822.8 336.3M-90.0 1359.3L229.5 219.8M-197.9 473.3L799.6 327.7M-33.6 1329.3L233.3 219.6M-182.7 461.8L788.6 323.7M20.1 1300.8L236.9 219.4M-168.5 451.0L778.1 319.9M71.4 1273.5L240.6 219.2M-155.2 440.8L768.0 316.2M167.1 1222.6L247.9 218.9M-131.0 422.4L749.0 309.2M211.9 1198.7L251.6 218.7M-119.9 413.9L740.0 305.9M254.8 1175.9L255.2 218.5M-109.4 406.0L731.3 302.7M295.9 1154.0L258.8 218.3M-99.6 398.4L722.9 299.6M373.3 1112.9L266.0 217.9M-81.3 384.5L707.0 293.8M409.7 1093.5L269.6 217.7M-72.9 378.1L699.4 291.0M444.8 1074.9L273.2 217.6M-64.8 372.0L692.1 288.3M478.5 1057.0L276.7 217.4M-57.2 366.1L685.0 285.7M542.3 1023.0L283.8 217.0M-42.9 355.3L671.6 280.8M572.5 1007.0L287.3 216.8M-36.3 350.2L665.1 278.4M601.6 991.5L290.8 216.7M-29.9 345.4L658.9 276.1M629.8 976.5L294.3 216.5M-23.9 340.7L652.8 273.9M683.3 948.0L301.2 216.1M-12.4 332.0L641.3 269.7M708.7 934.5L304.7 216.0M-7.1 328.0L635.8 267.7M733.4 921.4L308.1 215.8M-1.9 324.0L630.4 265.7M757.2 908.7L311.5 215.6M3.0 320.2L625.2 263.8M802.7 884.5L318.3 215.3M12.4 313.1L615.1 260.1M824.5 872.9L321.7 215.1M16.8 309.7L610.3 258.3M845.6 861.7L325.1 214.9M21.1 306.5L605.6 256.6M866.0 850.8L328.5 214.7M25.2 303.4L601.1 254.9M905.2 830.0L335.2 214.4M33.0 297.4L592.3 251.7M924.0 820.0L338.5 214.2M36.7 294.6L588.1 250.2M942.3 810.3L341.8 214.1M40.3 291.8L583.9 248.7M960.0 800.8L345.1 213.9M43.8 289.2L579.9 247.2M994.1 782.7L351.7 213.5M50.4 284.2L572.2 244.3M1010.5 774.0L355.0 213.4M53.6 281.7L568.4 243.0M1026.5 765.5L358.2 213.2M56.7 279.4L564.8 241.6M1042.0 757.2L361.5 213.0M59.6 277.1L561.2 240.3M1072.0 741.3L368.0 212.7M65.3 272.8L554.3 237.8M1086.4 733.6L371.2 212.5M68.0 270.8L551.0 236.6M1100.5 726.1L374.4 212.4M70.7 268.7L547.7 235.4M1114.2 718.8L377.6 212.2M73.2 266.8L544.5 234.2M1140.7 704.7L383.9 211.9M78.2 263.0L538.4 231.9M1153.5 697.9L387.1 211.7M80.5 261.2L535.4 230.8M1166.0 691.3L390.3 211.6M82.8 259.5L532.5 229.8M1178.3 684.8L393.4 211.4M85.1 257.8L529.6 228.7M1201.9 672.2L399.6 211.1M89.4 254.5L524.0 226.7M1213.3 666.1L402.8 210.9M91.5 252.9L521.3 225.7M1224.5 660.2L405.9 210.8M93.5 251.3L518.7 224.7M1235.4 654.3L408.9 210.6M95.5 249.8L516.1 223.8M1256.6 643.1L415.1 210.3M99.3 246.9L511.1 221.9M1266.9 637.6L418.1 210.1M101.1 245.5L508.6 221.0M1276.9 632.3L421.2 210.0M102.9 244.2L506.3 220.2M1286.8 627.0L424.2 209.8M104.7 242.8L503.9 219.3M1305.9 616.9L430.3 209.5M108.0 240.3L499.3 217.6M1315.2 611.9L433.3 209.4M109.7 239.0L497.1 216.8M1324.3 607.1L436.3 209.2M111.3 237.8L494.9 216.0M1333.2 602.4L439.3 209.1M112.9 236.6L492.8 215.2M1350.5 593.1L445.2 208.8M115.9 234.3L488.6 213.7M1358.9 588.7L448.2 208.6M117.4 233.2L486.6 212.9M1367.2 584.3L451.1 208.5M118.8 232.1L484.6 212.2M1375.3 580.0L454.1 208.3M120.2 231.0L482.6 211.5M1391.1 571.6L459.9 208.0M122.9 228.9L478.8 210.1M1398.7 567.5L462.8 207.9M124.3 227.9L476.9 209.4M1406.3 563.5L465.7 207.7M125.6 226.9L475.1 208.7M1413.7 559.5L468.6 207.6M126.8 225.9L473.3 208.1" stroke="url(#gm)" stroke-width="0.7" fill="none"/><path d="M-4300.2 3598.7L128.1 225.0M-4300.2 3598.7L1421.0 555.7M-2615.4 2702.6L148.4 224.0M-1406.7 1394.3L1211.1 478.7M-1620.3 2173.3L168.3 222.9M-761.1 902.4L1065.3 425.2M-963.4 1823.9L187.8 221.9M-476.8 685.8L958.1 385.9M-497.2 1575.9L207.0 221.0M-316.7 563.9L875.9 355.7M-149.3 1390.9L225.8 220.0M-214.1 485.7L811.0 331.9M120.3 1247.4L244.3 219.0M-142.7 431.3L758.3 312.6M335.4 1133.1L262.4 218.1M-90.2 391.3L714.8 296.6M511.0 1039.7L280.3 217.2M-49.9 360.6L678.2 283.2M657.0 962.0L297.7 216.3M-18.0 336.3L647.0 271.8M780.3 896.4L314.9 215.4M7.8 316.6L620.1 261.9M885.9 840.2L331.8 214.6M29.2 300.3L596.6 253.3M977.3 791.6L348.4 213.7M47.2 286.6L576.0 245.7M1057.2 749.1L364.7 212.9M62.5 275.0L557.7 239.0M1127.6 711.7L380.8 212.1M75.7 264.9L541.4 233.1M1190.2 678.4L396.5 211.3M87.3 256.1L526.8 227.7M1246.1 648.7L412.0 210.5M97.4 248.4L513.6 222.8M1296.4 621.9L427.3 209.7M106.4 241.5L501.6 218.5M1341.9 597.7L442.3 208.9M114.4 235.4L490.7 214.4M1383.3 575.7L457.0 208.2M121.6 229.9L480.7 210.8M1421.0 555.7L471.5 207.4M128.1 225.0L471.5 207.4" stroke="url(#gM)" stroke-width="0.9" fill="none"/><path d="M362.4 284.9L620.1 261.9" stroke="#eaa0a0" stroke-width="1"/><path d="M362.4 284.9L314.9 215.4" stroke="#9cc49c" stroke-width="1"/><path d="M362.4 284.9L362.4 254.9" stroke="#6a6ae0" stroke-width="1"/></svg><!--/GRID--></div>
</div>
<div id="canvasitems">
<!-- toggles -->
<div class="a" style="left:560px;top:146px;width:81px;height:19px;background:#fbfbfb;border:1px solid #e6e6e6;border-radius:2px"></div>
<div class="a" style="left:601px;top:147px;width:1px;height:17px;background:#e6e6e6"></div>
<svg class="a" style="left:565px;top:148px" width="32" height="15" viewBox="0 0 32 15"><g fill="none" stroke="#7a7a7a" stroke-width="0.9"><circle cx="6" cy="9" r="4.5"/><path d="M5 12l5-9 5 9z"/><rect x="20" y="5" width="7" height="8"/><path d="M20 5l2-2h7v8l-2 2M27 5l2-2"/></g></svg>
<svg class="a" style="left:606px;top:149px" width="32" height="13" viewBox="0 0 32 13"><g fill="#7ec0f0" stroke="#3f9ee0" stroke-width="0.8"><rect x="1" y="1" width="9" height="5"/><rect x="4" y="8" width="8" height="4"/><rect x="20" y="4" width="11" height="7"/></g><path d="M10 3.5c5 0 5 3.5 10 3.5M12 10c4 0 4-3 8-3" fill="none" stroke="#3f9ee0" stroke-width="0.8"/></svg>
<div class="a" style="left:623px;top:173px;width:18px;height:56px;background:#fbfbfb;border:1px solid #ececec;border-radius:2px"></div>
<svg class="a" style="left:623px;top:173px" width="18" height="56" viewBox="0 0 18 56"><g fill="none" stroke="#707070" stroke-width="1.2"><path d="M4 8V5h3M14 8V5h-3M4 12v3h3M14 12v3h-3"/><path d="M9 23v9M4.5 27.5h9"/><path d="M4.5 46h9"/></g></svg>
<div class="a" style="left:623px;top:234px;width:18px;height:18px;background:#fbfbfb;border:1px solid #ececec;border-radius:2px"></div>
<svg class="a" style="left:623px;top:234px" width="18" height="18" viewBox="0 0 18 18"><path d="M9 3v12M3 9h12" stroke="#707070" stroke-width="1.4"/><path d="M9 2l-2 2.5h4zM9 16l-2-2.5h4zM2 9l2.5-2v4zM16 9l-2.5-2v4z" fill="#707070"/></svg>
<svg class="a" style="left:623px;top:257px" width="18" height="20" viewBox="0 0 18 20"><g fill="none" stroke="#7a7a7a" stroke-width="0.9"><path d="M9 4l5 2.5v6L9 15l-5-2.5v-6zM9 9v6M9 9l5-2.5M9 9L4 6.5"/><path d="M2 2v16h15" stroke="#9a9a9a"/></g></svg>
<!-- wires -->
<svg class="a" style="left:0;top:0" width="650" height="580" viewBox="0 0 650 580"><g fill="none" stroke="#505050" stroke-width="1.6">
<path d="M97 299.5C122 299.5 122 295 147.5 295"/>
<path d="M228 295C270 295 270 261.5 311.5 261.5"/>
<path d="M228 295C270 295 270 349.5 313 349.5"/>
<path d="M228 295C270 295 270 440 313 440"/>
<path d="M228.5 368C270 368 270 277 311.5 277"/>
<path d="M228.5 375.5C270 375.5 270 365 313 365"/>
<path d="M228.5 383C270 383 270 455 313 455"/>
<path d="M414.5 261.5C445 261.5 445 252.5 476 252.5"/>
<path d="M416 349.5C445 349.5 445 345 474.5 345"/>
</g><path d="M416 440C441 440 441 448 466 448" fill="none" stroke="#5ab4e6" stroke-width="1.8"/></svg>

<!-- Select Object -->
<div class="node" style="left:8px;top:269px;width:89px;height:61px"><div class="nh" style="height:21px"></div></div>
<svg class="a" style="left:12px;top:273px" width="12" height="13" viewBox="0 0 12 13"><path d="M1 3l3-2h7v10H1z" fill="#d8d8d8"/><path d="M8 8l3 4" stroke="#f0f0f0" stroke-width="1.2"/></svg>
<div class="nt" style="left:29px;top:274.5px">Select Object</div>
<div class="a" style="left:12.5px;top:292.5px;width:50px;height:11px;border:1px solid #6a6a6a;background:#363636"></div>
<div class="t" style="left:25.5px;top:295.5px;font-size:5.3px;font-weight:bold;color:#e6e6e6">Seleziona</div>
<div class="pout" style="left:67px;top:293px;width:30px;height:13px;font-size:5.6px">Object</div>
<div class="t" style="left:13px;top:308.5px;font-size:5.5px;color:#e0e0e0">Oggetto : 90C1DBA</div>
<div class="kb" style="left:89.5px;top:321px"></div>

<!-- Python Script -->
<div class="node" style="left:147.5px;top:265px;width:81px;height:53px"><div class="nh" style="height:21px"></div></div>
<svg class="a" style="left:153px;top:270px" width="11" height="11" viewBox="0 0 11 11"><path d="M5.5 0.5c-3 0-3 1.5-3 2.5v1.5h3.2v.6H1.5C0.5 5.1 0 6 0 7.5s.6 2.6 1.8 2.6h1V8.5c0-1 .8-1.8 1.8-1.8h3.2c.8 0 1.4-.6 1.4-1.4V2.9C9.2 1.5 8 0.5 5.5 0.5z" fill="#4a7fb5"/><path d="M5.5 10.5c3 0 3-1.5 3-2.5V6.5H5.3v-.6h4.2c1 0 1.5-.9 1.5-2.4s-.6-2.6-1.8-2.6" fill="#e6c44a" transform="translate(0 0.5)"/></svg>
<div class="nt" style="left:169px;top:270.5px">Python Script</div>
<div class="pin" style="left:147.5px;top:288px;width:24px;height:14px">IN[0]</div>
<div class="a" style="left:177px;top:288.5px;width:10px;height:9.5px;background:#444"></div>
<div class="t" style="left:179px;top:289px;font-size:8px;color:#b0b0b0">+</div>
<div class="a" style="left:189px;top:288.5px;width:9.5px;height:9.5px;background:#444"></div>
<div class="a" style="left:191.5px;top:293px;width:4px;height:1px;background:#999"></div>
<div class="pout" style="left:203px;top:288px;width:25px;height:14px">OUT</div>
<div class="t" style="left:154px;top:310.5px;font-size:5px;color:#d0d0d0">(Python3)</div>
<div class="kb" style="left:220.5px;top:308px"></div>

<!-- List 1 -->
<div class="node" style="left:311.5px;top:231.5px;width:103px;height:66px"><div class="nh" style="height:21px"></div></div>
<svg class="a" style="left:317px;top:236px" width="11" height="11" viewBox="0 0 11 11"><rect x="1" y="5" width="9" height="5" rx="1" fill="#4a86c0"/><path d="M5 1v6" stroke="#aac" stroke-width="0.8"/></svg>
<div class="nt" style="left:333px;top:237px">List.GetItemAtIndex</div>
<div class="pin" style="left:311.5px;top:255px;width:57px;height:13px">list<span style="position:absolute;right:4px">&gt;</span></div>
<div class="pin" style="left:311.5px;top:270.5px;width:57px;height:13px">index<span style="position:absolute;right:4px">&gt;</span></div>
<div class="pout" style="left:389px;top:255px;width:25.5px;height:13px">item</div>
<div class="t" style="left:387px;top:289px;font-size:5px;color:#d8d8d8">AUTO</div>
<div class="a" style="left:403px;top:286px;width:11.5px;height:11.5px;background:#2e2e2e"></div>
<div class="kb" style="left:408px;top:288.5px"></div>

<!-- List 2 -->
<div class="node" style="left:313px;top:319px;width:103px;height:66.5px"><div class="nh" style="height:21.5px"></div></div>
<svg class="a" style="left:319px;top:324px" width="11" height="11" viewBox="0 0 11 11"><rect x="1" y="5" width="9" height="5" rx="1" fill="#4a86c0"/><path d="M5 1v6" stroke="#aac" stroke-width="0.8"/></svg>
<div class="nt" style="left:335px;top:325px">List.GetItemAtIndex</div>
<div class="pin" style="left:313px;top:343px;width:57px;height:13.5px">list<span style="position:absolute;right:4px">&gt;</span></div>
<div class="pin" style="left:313px;top:358.5px;width:57px;height:13.5px">index<span style="position:absolute;right:4px">&gt;</span></div>
<div class="pout" style="left:391px;top:343px;width:25px;height:13.5px">item</div>
<div class="t" style="left:389px;top:377px;font-size:5px;color:#d8d8d8">AUTO</div>
<div class="kb" style="left:409px;top:375px"></div>

<!-- List 3 -->
<div class="node" style="left:313px;top:409.5px;width:103px;height:66.5px"><div class="nh" style="height:21.5px"></div></div>
<svg class="a" style="left:319px;top:414.5px" width="11" height="11" viewBox="0 0 11 11"><rect x="1" y="5" width="9" height="5" rx="1" fill="#4a86c0"/><path d="M5 1v6" stroke="#aac" stroke-width="0.8"/></svg>
<div class="nt" style="left:335px;top:415.5px">List.GetItemAtIndex</div>
<div class="pin" style="left:313px;top:433.5px;width:57px;height:13px">list<span style="position:absolute;right:4px">&gt;</span></div>
<div class="pin" style="left:313px;top:448.5px;width:57px;height:13.5px">index<span style="position:absolute;right:4px">&gt;</span></div>
<div class="pout" style="left:391px;top:433.5px;width:25px;height:13px">item</div>
<div class="t" style="left:389px;top:467.5px;font-size:5px;color:#d8d8d8">AUTO</div>
<div class="kb" style="left:409px;top:465.5px"></div>

<!-- Code Block -->
<div class="node" style="left:159px;top:337px;width:70.5px;height:64.5px"><div class="nh" style="height:21px"></div></div>
<div class="t" style="left:165px;top:343px;font-size:8px;color:#bbb">[<span style="color:#d05050">|</span>]</div>
<div class="nt" style="left:180px;top:342px">Code Block</div>
<div class="a" style="left:162px;top:361.5px;width:53px;height:27px;border:1px solid #5a5a5a;background:#353535"></div>
<div class="a" style="left:176px;top:363px;width:5px;height:24px;background:#2f3a42"></div>
<div class="t" style="left:170px;top:364.5px;font-size:6.3px;line-height:7.7px;color:#c8c8c8;white-space:pre">1 <span style="color:#8cc4e8">0</span>;
2 <span style="color:#8cc4e8">1</span>;
3 <span style="color:#8cc4e8">2</span>;</div>
<div class="a" style="left:219px;top:365px;width:9px;height:6px;background:#5a5a5a"></div>
<div class="a" style="left:219px;top:372.5px;width:9px;height:6px;background:#5a5a5a"></div>
<div class="a" style="left:219px;top:380px;width:9px;height:6px;background:#5a5a5a"></div>
<div class="t" style="left:222px;top:365.5px;font-size:5px;line-height:7.5px;color:#d0d0d0;white-space:pre">&gt;
&gt;
&gt;</div>
<div class="kb" style="left:222.5px;top:392px"></div>

<!-- ObjectID -->
<div class="node" style="left:476px;top:223px;width:96px;height:54px"><div class="nh" style="height:20px"></div></div>
<svg class="a" style="left:481px;top:228px" width="10" height="10" viewBox="0 0 10 10"><path d="M1 9c0-5 2-8 4-8s4 3 4 8" fill="none" stroke="#5a8fc0" stroke-width="1"/><path d="M2 9h6" stroke="#cfcfcf"/></svg>
<div class="nt" style="left:497px;top:228.5px">ObjectID</div>
<div class="a" style="left:563px;top:231px;width:4.5px;height:4.5px;border-radius:50%;background:#6cbde8"></div>
<div class="pin" style="left:476px;top:245.5px;width:13px;height:14px;font-size:5px">&gt;</div>
<div class="a" style="left:491px;top:246px;width:62px;height:18px;border:1px solid #6a6a6a"></div>
<div class="t" style="left:498px;top:251px;font-size:5.6px;font-family:'Liberation Mono',monospace;color:#e4e4e4">(2630599375136)</div>
<div class="pout" style="left:556px;top:246px;width:16px;height:13.5px;font-size:5px">&gt;</div>
<div class="kb" style="left:565.5px;top:268px"></div>

<!-- Handle -->
<div class="node" style="left:474.5px;top:315px;width:68.5px;height:54px"><div class="nh" style="height:21px"></div></div>
<svg class="a" style="left:480px;top:320px" width="10" height="11" viewBox="0 0 10 11"><rect x="0.5" y="0.5" width="9" height="9" fill="none" stroke="#7a9ab8" stroke-width="0.9"/><path d="M1 8l3-4 2 2 3-3" stroke="#aac" stroke-width="0.8" fill="none"/></svg>
<div class="nt" style="left:495.5px;top:320.5px">Handle</div>
<div class="a" style="left:533.5px;top:323px;width:4.5px;height:4.5px;border-radius:50%;background:#6cbde8"></div>
<div class="pin" style="left:474.5px;top:338px;width:13px;height:14px;font-size:5px">&gt;</div>
<div class="a" style="left:490px;top:338px;width:34px;height:18px;border:1px solid #6a6a6a"></div>
<div class="t" style="left:495px;top:342.5px;font-size:6.2px;font-family:'Liberation Mono',monospace;color:#e4e4e4">90C1D8A</div>
<div class="pout" style="left:527px;top:338px;width:16px;height:14px;font-size:5px">&gt;</div>
<div class="kb" style="left:536.5px;top:360px"></div>

<!-- Name -->
<div class="a" style="left:466px;top:417px;width:60.5px;height:56.5px;border-radius:3.5px;background:#8ccff2"></div>
<div class="node" style="left:467.7px;top:418.7px;width:57.1px;height:53.1px"><div class="nh" style="height:19px"></div></div>
<svg class="a" style="left:472px;top:423px" width="10" height="11" viewBox="0 0 10 11"><rect x="0.5" y="0.5" width="9" height="9" fill="none" stroke="#7a9ab8" stroke-width="0.9"/><path d="M1 8l3-4 2 2 3-3" stroke="#aac" stroke-width="0.8" fill="none"/></svg>
<div class="nt" style="left:489px;top:424px">Name</div>
<div class="a" style="left:516px;top:426.5px;width:4.5px;height:4.5px;border-radius:50%;background:#6cbde8"></div>
<div class="pin" style="left:468px;top:441px;width:12px;height:14px;font-size:5px">&gt;</div>
<div class="a" style="left:483px;top:441.5px;width:24px;height:18px;border:1px solid #6a6a6a"></div>
<div class="t" style="left:488px;top:446px;font-size:5.8px;font-family:'Liberation Mono',monospace;color:#e0a888">+TSD</div>
<div class="pout" style="left:510px;top:441px;width:14.5px;height:14px;font-size:5px">&gt;</div>
<div class="kb" style="left:518.5px;top:462px"></div>
</div>
<!-- status -->
<div class="a" style="left:0;top:541.5px;width:650px;height:38.5px;background:#3b3937"></div>
<div class="a" style="left:0;top:541px;width:647px;height:2.5px;background:linear-gradient(#b8b8b8,#5a5856)"></div>
<div class="a" style="left:0;top:546px;width:6px;height:27px;background:#1da597"></div>
<div class="a" style="left:16px;top:551px;width:114px;height:20px;border:1.8px solid #9a9896;border-radius:3px;background:#43403d"></div>
<div class="t" style="left:21px;top:556px;font-size:9.7px;color:#d6d6d6">Esecuzione completata.</div>
<svg class="a" style="left:639px;top:569px" width="9" height="9" viewBox="0 0 9 9"><path d="M8 1v8M5.5 4v5M3 6.5v2.5M0.5 8v1" stroke="#bdbdbd" stroke-width="1.2"/></svg>
</div>

</body></html>
